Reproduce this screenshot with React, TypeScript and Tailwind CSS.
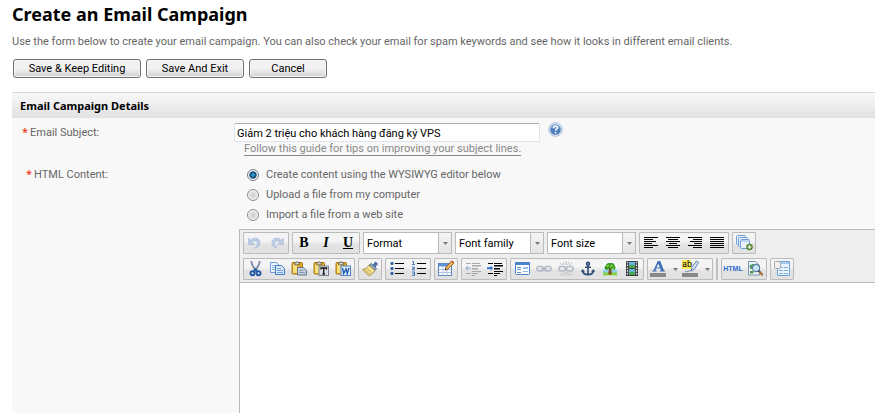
import type { ReactNode } from "react";

const blue = "#3f6fb5";

function Icon({ children }: { children: ReactNode }) {
  return (
    <svg viewBox="0 0 16 16" className="block size-4 overflow-visible" aria-hidden="true">
      {children}
    </svg>
  );
}

function Group({ children }: { children: ReactNode }) {
  return (
    <div className="flex h-[22px] shrink-0 rounded-[1px] border border-[#bbbbbb] bg-linear-to-b from-[#f4f4f4] from-40% to-[#e2e2e2] to-60%">
      {children}
    </div>
  );
}

function Tool({ label, children }: { label: string; children: ReactNode }) {
  return (
    <button type="button" aria-label={label} title={label} className="flex h-5 w-[22px] items-center justify-center">
      {children}
    </button>
  );
}

function Glyph({ label, className, children }: { label: string; className: string; children: ReactNode }) {
  return (
    <Tool label={label}>
      <span className={`font-['Liberation_Serif',serif] text-[14px] leading-4 font-bold text-black ${className}`}>
        {children}
      </span>
    </Tool>
  );
}

function Picker({ label }: { label: string }) {
  return (
    <div className="relative h-[22px] w-[89px] shrink-0">
      <select
        aria-label={label}
        className="block h-full w-full appearance-none border border-[#bbbbbb] bg-white pt-px pr-4 pl-[3px] text-[11px] text-black"
      >
        <option>{label}</option>
      </select>
      <span className="pointer-events-none absolute inset-y-px right-px flex w-[13px] items-center justify-center border-l border-[#bbbbbb] bg-linear-to-b from-[#f4f4f4] to-[#e4e4e4]">
        <Caret />
      </span>
    </div>
  );
}

function Caret() {
  return (
    <svg viewBox="0 0 5 3" className="block h-[3px] w-[5px]" aria-hidden="true">
      <path d="M0 0h5L2.5 3z" fill="#777" />
    </svg>
  );
}

function Lines({ rows }: { rows: [number, number][] }) {
  return (
    <Icon>
      {rows.map(([x, w], i) => (
        <rect key={i} x={x} y={2 + i * 2} width={w} height="1" fill="#000" />
      ))}
    </Icon>
  );
}

function Clipboard({ children }: { children: ReactNode }) {
  return (
    <Icon>
      <rect x="1" y="1.500" width="10.500" height="11.500" rx="1" fill="#e6ad22" stroke="#9c6c12" strokeWidth=".9" />
      <path d="M2 3h4v9H2z" fill="#fadf7c" />
      <path d="M3.500 3.800V1.800H5C5 .3 7.200 .3 7.200 1.800h1.500v2z" fill="#d4d4d4" stroke="#66583a" strokeWidth=".8" />
      {children}
    </Icon>
  );
}

function Chain({ broken }: { broken?: boolean }) {
  return (
    <Icon>
      <g fill="none" stroke="#b4bac6" strokeWidth="1.600">
        <rect x="1" y="5.500" width="6.500" height="4.500" rx="2.200" />
        <rect x="8.500" y="5.500" width="6.500" height="4.500" rx="2.200" />
        {!broken && <path d="M5 7.750h6" />}
      </g>
      {broken && (
        <path
          d="M8 0v4M5 1l1.500 3M11 1L9.500 4M2 2l2.500 2.500M14 2l-2.500 2.500M8 15v-4M5 14.500L6.500 11.500M11 14.500L9.500 11.500M2 14l2.500-2.500M14 14l-2.500-2.500"
          stroke="#bcc0c8"
          strokeWidth="1"
        />
      )}
    </Icon>
  );
}

function Indent({ faded, flip }: { faded?: boolean; flip?: boolean }) {
  const ink = faded ? "#a9a9a9" : "#000";
  return (
    <Icon>
      <g fill={ink}>
        <rect x="1" y="2" width="5" height="1" />
        <rect x="7" y="2" width="8" height="1" />
        <rect x="7" y="4" width="9" height="1.500" />
        <rect x="7" y="7" width="6" height="1.500" />
        <rect x="7" y="10" width="9" height="1" />
        <rect x="1" y="12" width="5" height="1" />
        <rect x="7" y="12" width="6" height="1" />
        <rect x="7" y="14" width="3" height="1" />
      </g>
      <path
        d={flip ? "M0 7l3-2.500v2h3v1.500H3v2z" : "M6 7L3.500 4.500v1.800H0v1.700h3.500v1.800z"}
        fill={faded ? "#a5bbdc" : "#2f6fd0"}
      />
    </Icon>
  );
}

function Arrow({ flip }: { flip?: boolean }) {
  return (
    <Icon>
      <g transform={flip ? "translate(16 0) scale(-1 1)" : undefined}>
        <path
          d="M1.500 3v6.500h6L5.400 7.300C7.500 4.800 10.600 6 10.400 9c-.1 1.700-1.200 3-2.900 4.300 3.500-.6 5.600-2.700 5.600-5.600C13.100 3.200 7.300 1.300 3.700 5.300z"
          fill="#bccce4"
          stroke="#a5b9d8"
          strokeWidth=".6"
        />
      </g>
    </Icon>
  );
}

const contentSources = [
  "Create content using the WYSIWYG editor below",
  "Upload a file from my computer",
  "Import a file from a web site",
];

const actions = [
  { label: "Save & Keep Editing", width: "w-32" },
  { label: "Save And Exit", width: "w-[98px]" },
  { label: "Cancel", width: "w-[78px]" },
];

function FirstRow() {
  return (
    <div className="flex gap-[3px]">
      <Group>
        <Tool label="Undo"><Arrow /></Tool>
        <Tool label="Redo"><Arrow flip /></Tool>
      </Group>
      <Group>
        <Glyph label="Bold" className="">B</Glyph>
        <Glyph label="Italic" className="italic">I</Glyph>
        <Glyph label="Underline" className="underline">U</Glyph>
      </Group>
      <Picker label="Format" />
      <Picker label="Font family" />
      <Picker label="Font size" />
      <Group>
        <Tool label="Align left"><Lines rows={[[1, 14], [1, 9], [1, 12], [1, 8], [1, 14], [1, 9]]} /></Tool>
        <Tool label="Align center"><Lines rows={[[1, 14], [3, 10], [1, 14], [4, 8], [1, 14], [3, 10]]} /></Tool>
        <Tool label="Align right"><Lines rows={[[1, 14], [6, 9], [3, 12], [7, 8], [1, 14], [6, 9]]} /></Tool>
        <Tool label="Justify"><Lines rows={[[1, 14], [1, 14], [1, 14], [1, 14], [1, 14], [1, 14]]} /></Tool>
      </Group>
      <Group>
        <Tool label="Insert layer">
          <Icon>
            <g fill="#e8f1fb" stroke="#6f9fd6" strokeWidth="1">
              <rect x=".5" y=".5" width="9" height="9" rx="1" />
              <rect x="2.500" y="2.500" width="9" height="9" rx="1" />
              <rect x="4.500" y="4.500" width="9" height="9" rx="1" />
            </g>
            <path d="M5 6h8" stroke="#8fb6e4" strokeWidth="1" />
            <circle cx="13.500" cy="12" r="3" fill="#5c8f3b" stroke="#3e6e22" strokeWidth=".6" />
            <path d="M13.500 10.200v3.600M11.700 12h3.600" stroke="#fff" strokeWidth="1.200" />
          </Icon>
        </Tool>
      </Group>
    </div>
  );
}

function SecondRow() {
  return (
    <div className="flex gap-[3px]">
      <Group>
        <Tool label="Cut">
          <Icon>
            <path d="M4.500 0C4 3 6 6 9.500 11M12.500 0C13 3 11 6 7.500 11" fill="none" stroke="#7c8ca4" strokeWidth="1.800" />
            <circle cx="5.500" cy="12.300" r="2" fill="none" stroke="#2458a8" strokeWidth="1.900" />
            <circle cx="11.500" cy="12.300" r="2" fill="none" stroke="#2458a8" strokeWidth="1.900" />
            <path d="M6.800 10.500L8.500 8l1.800 2.500" fill="none" stroke="#2458a8" strokeWidth="1.700" />
          </Icon>
        </Tool>
        <Tool label="Copy">
          <Icon>
            <path d="M1.500 1.500h6l3 3v7h-9z" fill="#eef5fd" stroke="#6d9ad6" />
            <path d="M3 4.500h4M3 6.500h4M3 8.500h3" stroke="#8db2e2" />
            <path d="M6.500 4.500h6l3 3v6h-9z" fill="#dce9fa" stroke="#3f78c4" />
            <path d="M8 7.500h4M8 9.500h6M8 11.500h6" stroke="#76a2dc" />
          </Icon>
        </Tool>
        <Tool label="Paste">
          <Clipboard>
            <path d="M6.500 6.500h5.500l3.500 3v4.500h-9z" fill="#c6d0de" stroke="#66758b" />
            <path d="M8 9.500h4M8 11.500h6" stroke="#8796ab" />
          </Clipboard>
        </Tool>
        <Tool label="Paste as text">
          <Clipboard>
            <rect x="6" y="5" width="9.500" height="9.500" fill="#d9dde3" stroke="#77818f" />
            <path d="M8 8.500V7h5.500v1.500M10.750 7v6M9.500 13h2.500" fill="none" stroke="#111" strokeWidth="1.300" />
          </Clipboard>
        </Tool>
        <Tool label="Paste from Word">
          <Clipboard>
            <rect x="6" y="5" width="9.500" height="9.500" fill="#e4eefb" stroke="#4f82c6" />
            <path d="M7.500 7l1.200 5.500L11 8l1.200 4.500L14 7" fill="none" stroke="#225bb0" strokeWidth="1.400" />
          </Clipboard>
        </Tool>
      </Group>
      <Group>
        <Tool label="Clean up">
          <Icon>
            <path d="M11 4.500L13.500 1l2 1.800-2.500 3.200z" fill="#4d78b8" stroke="#31568c" strokeWidth=".8" />
            <path d="M9.500 2.500l5 5-1.500 2-6-5.500z" fill="#8ea3c0" stroke="#4d6486" strokeWidth=".8" />
            <path d="M7 4l6 5.500C11.500 12 9 14 6.500 14.500L.8 8.500C3.500 8 5.500 6.500 7 4z" fill="#f5e39a" stroke="#94782a" strokeWidth=".8" />
            <path d="M3 8.500l4.500 5M5 7.500l4.500 4.500" stroke="#c09a34" strokeWidth=".9" />
          </Icon>
        </Tool>
      </Group>
      <Group>
        <Tool label="Bulleted list">
          <Icon>
            {[2, 7, 12].map((y) => (
              <g key={y}>
                <rect x="1.500" y={y - 1} width="3" height="3" rx="1" fill="#2f5ea8" />
                <rect x="6" y={y} width="9" height="1" fill="#000" />
              </g>
            ))}
          </Icon>
        </Tool>
        <Tool label="Numbered list">
          <Icon>
            <path
              d="M1 .5h1.500v3M1 3.500h3M1 6h2.500v1.500H1.500V9H4M1 11h2.500v3.500H1M1.500 12.700h2"
              fill="none"
              stroke="#4b7cc4"
              strokeWidth="1"
            />
            {[2, 7, 12].map((y) => (
              <rect key={y} x="6" y={y} width="9" height="1" fill="#000" />
            ))}
          </Icon>
        </Tool>
      </Group>
      <Group>
        <Tool label="Insert table">
          <Icon>
            <rect x=".5" y="2.500" width="13" height="12" fill="#fff" stroke="#5c86c0" />
            <rect x="1" y="3" width="12" height="2.500" fill="#5f92d8" />
            <path d="M1 8.500h12M1 11.500h12M5 5.500v9M9 5.500v9" stroke="#adc6e8" />
            <path d="M7 9l1-3 5.500-6L16 2.200 10 8z" fill="#f0b556" stroke="#6b4a23" strokeWidth=".8" />
            <path d="M13 .5L14 -.5 16.500 1.500l-1 1z" fill="#c8543c" />
            <path d="M7 9l.5-1.500 1 1z" fill="#222" />
          </Icon>
        </Tool>
      </Group>
      <Group>
        <Tool label="Outdent"><Indent faded flip /></Tool>
        <Tool label="Indent"><Indent /></Tool>
      </Group>
      <Group>
        <Tool label="Edit style">
          <Icon>
            <rect x="1.500" y="1.500" width="14" height="12" rx="1" fill="#fff" stroke="#4c82ca" />
            <rect x="1" y="1" width="15" height="3" rx="1" fill="#4c82ca" />
            <path d="M3 6.500h4M3 8.500h4M3 11.500h4" stroke="#5f90d2" />
            <rect x="9" y="6" width="5" height="2" fill="#9dbde6" />
            <path d="M9 10.500h5" stroke="#8db2e2" />
          </Icon>
        </Tool>
        <Tool label="Insert link"><Chain /></Tool>
        <Tool label="Remove link"><Chain broken /></Tool>
        <Tool label="Insert anchor">
          <Icon>
            <g fill="none" stroke="#2c4a75" strokeWidth="1.600">
              <circle cx="8" cy="2.800" r="1.400" />
              <path d="M8 4.500v9M5 6.300h6M2.500 9.500c.5 3 2.500 4.200 5.500 4.200s5-1.200 5.500-4.200" />
            </g>
            <path d="M1 11l1.500-3L5 10.500zM15 11l-1.500-3L11 10.500z" fill="#2c4a75" />
          </Icon>
        </Tool>
        <Tool label="Insert image">
          <Icon>
            <rect x="1" y="1" width="14" height="13.500" fill="#f4fbff" />
            <rect x="1" y="8.500" width="14" height="3.500" fill="#8fd0f0" />
            <rect x="1" y="11.500" width="14" height="3" fill="#86cf3f" />
            <path d="M7 7h2.200l.6 6.500H6.300z" fill="#7c4d1e" />
            <path d="M4 8.500C1.800 8 2.300 5 4 4.800 4 2.300 6.500 1.300 8.500 2.300 11 1.300 13 3 12.500 5c1.800 1 1.300 3.600-.8 3.800-1.500 0-2-1-3.500-1S5.500 9.200 4 8.500z" fill="#379420" />
            <path d="M4.500 6l2.500-2M8 6l2.500-2.300M10 7.800l2-1.300" stroke="#8edb45" strokeWidth="1.300" />
          </Icon>
        </Tool>
        <Tool label="Insert media">
          <Icon>
            <rect x="2" y="0" width="12" height="15" fill="#3c3f42" />
            <rect x="5" y="1" width="6" height="6" fill="#68b7d9" />
            <rect x="5" y="8" width="6" height="6" fill="#68b7d9" />
            <path d="M5 7V5l3-1.500L11 5v2zM5 14v-2l3-1.500 3 1.500v2z" fill="#49a34d" />
            <path d="M3.500.8v14M12.500.8v14" stroke="#e6e6e6" strokeWidth="1.300" strokeDasharray="1.500 1.300" />
          </Icon>
        </Tool>
      </Group>
      <Group>
        <Tool label="Text color">
          <Icon>
            <path
              d="M6.800 0h2.400l3.800 9.500h1v1H8.800v-1h1.300l-.7-2H5l-.7 2h1.400v1H1.300v-1h1.100zM7.200 2.800L5.500 6.500h3.400z"
              fill={blue}
              fillRule="evenodd"
            />
            <rect x="-1" y="12" width="16" height="4" fill="#888" />
          </Icon>
        </Tool>
        <button type="button" aria-label="Choose text color" className="flex h-5 w-2.5 items-center justify-center"><Caret /></button>
        <Tool label="Highlight color">
          <span className="relative block size-4">
            <Icon>
              <rect x="-1" y="-1" width="9" height="9" fill="#f8ec4f" />
              <path d="M9 6l4.500-6 2 1.500L11.500 8 8 10z" fill="#dfe7f2" stroke="#4a6fa8" strokeWidth=".9" />
              <path d="M2 10.500c2 1 4-1.500 6-.5" fill="none" stroke="#6d7f9b" strokeWidth=".9" />
              <rect x="-1" y="12" width="16" height="4" fill="#888" />
            </Icon>
            <span className="absolute -top-px -left-px text-[9px] leading-[9px] text-black">ab</span>
          </span>
        </Tool>
        <button type="button" aria-label="Choose highlight color" className="flex h-5 w-2.5 items-center justify-center"><Caret /></button>
      </Group>
      <div className="h-[22px] w-0.5 shrink-0 bg-[#c0c0c0]" />
      <Group>
        <Tool label="Edit HTML source">
          <span className="font-['Liberation_Sans',sans-serif] text-[7px] leading-4 font-bold text-[#2f6bd0]">HTML</span>
        </Tool>
        <Tool label="Preview">
          <Icon>
            <path d="M1.500.500h7l4 4v9.500h-11z" fill="#eef5fb" stroke="#7c92a8" />
            <path d="M2.500 4.500l4-2 1 3-2 3-2.500-1zM3 10h3.500v2.500H3z" fill="#4f9a57" />
            <circle cx="9" cy="7" r="3.600" fill="#c9e4f5" stroke="#5b7fa5" strokeWidth="1.200" />
            <path d="M11.500 9.700l1.500 1.600" stroke="#34495f" strokeWidth="2.200" />
            <path d="M13 11.300l2 2.200" stroke="#a8733a" strokeWidth="2.400" strokeLinecap="round" />
          </Icon>
        </Tool>
      </Group>
      <Group>
        <Tool label="Insert content">
          <Icon>
            <path d="M3.500.500h12v14h-12z" fill="#e9f3fd" stroke="#6fa1dc" />
            <path d="M4 2h11" stroke="#a9caef" strokeWidth="2" />
            <path d="M5 6.500h9M5 9.500h9M5 12.500h9" stroke="#7faed0" />
            <path d="M9.500 5v9" stroke="#e9f3fd" />
            <rect x=".5" y=".5" width="6" height="7" rx="1" fill="#efefef" stroke="#a8a8a8" />
          </Icon>
        </Tool>
      </Group>
    </div>
  );
}

export default function App() {
  return (
    <main className="w-full overflow-hidden bg-white pl-3 font-[Roboto,'Noto_Sans',sans-serif] text-[11px] leading-4 text-[#666666]">
      <h1 className="pt-0.5 font-['Noto_Sans',sans-serif] text-[18px] leading-6 font-bold text-black">
        Create an Email Campaign
      </h1>
      <p className="mt-2 whitespace-nowrap">
        Use the form below to create your email campaign. You can also check your email for spam keywords and see how it
        looks in different email clients.
      </p>
      <div className="mt-[9px] ml-px flex gap-[5px]">
        {actions.map((a) => (
          <button
            key={a.label}
            type="button"
            className={`h-[19px] rounded-[3px] border border-[#707070] bg-linear-to-b from-[#f2f2f2] from-50% to-[#d0d0d0] to-100% pt-px leading-4 whitespace-nowrap text-black shadow-[inset_0_0_0_1px_#f6f6f6] ${a.width}`}
          >
            {a.label}
          </button>
        ))}
      </div>

      <form className="mt-3.5 bg-[#f8f8f8]" onSubmit={(e) => e.preventDefault()}>
        <h2 className="h-[26px] border-t border-[#d8d8d8] bg-linear-to-b from-[#f8f8f8] to-[#e2e2e2] pl-2 font-['Noto_Sans',sans-serif] leading-[26px] font-bold text-black">
          Email Campaign Details
        </h2>

        <div className="flex pt-1">
          <label htmlFor="subject" className="w-[222px] shrink-0 pt-0.5 pl-2.5">
            <span className="mr-0.5 font-['Noto_Sans',sans-serif] text-[#ee2200]">*</span>Email Subject:
          </label>
          <div>
            <div className="flex items-start gap-2">
              <input
                id="subject"
                type="text"
                defaultValue="Giảm 2 triệu cho khách hàng đăng ký VPS"
                className="mt-px h-[19px] w-[306px] rounded-[2px] border border-[#dfe3ea] border-t-[#abadb3] bg-white px-0.5 pt-px text-black"
              />
              <button type="button" aria-label="Help" className="size-[15px]">
                <svg viewBox="0 0 15 15" className="block size-[15px]" aria-hidden="true">
                  <circle cx="7.500" cy="7.500" r="6.800" fill="#dfe8f3" stroke="#a9bdd8" />
                  <circle cx="7.500" cy="7.500" r="5.300" fill="#4f80bd" />
                  <path d="M3 6a4.700 4.200 0 0 1 9 0c-2 1.200-6 1.500-9 0z" fill="#7ba3d3" />
                  <path d="M5.600 5.900c0-2.500 3.900-2.500 3.900-.2 0 1.500-1.900 1.400-1.900 3" fill="none" stroke="#fff" strokeWidth="1.400" />
                  <circle cx="7.600" cy="10.600" r=".9" fill="#fff" />
                </svg>
              </button>
            </div>
            <a href="#guide" className="ml-2.5 block w-fit border-b border-[#888888] leading-[13px] text-[#888888]">
              Follow this guide for tips on improving your subject lines.
            </a>
          </div>
        </div>

        <div className="mt-2.5 flex">
          <div className="w-[227px] shrink-0 pl-3.5">
            <span className="mr-0.5 font-['Noto_Sans',sans-serif] text-[#ee2200]">*</span>HTML Content:
          </div>
          <div className="min-w-0 flex-1">
            <fieldset aria-label="HTML Content" className="pl-2">
              {contentSources.map((source, i) => (
                <label key={source} className="flex h-5 w-fit items-start gap-[7px] leading-[18px]">
                  <input
                    type="radio"
                    name="source"
                    defaultChecked={i === 0}
                    className="mt-[3px] size-3 appearance-none rounded-full border border-[#8e8f8f] bg-radial from-[#cfcfcf] to-[#f4f4f4] shadow-[inset_0_0_0_1px_#f4f4f4] checked:border-[#6f7f8d] checked:from-[#2ea0d8] checked:from-10% checked:via-[#123f63] checked:via-45% checked:to-[#f4f4f4] checked:to-60%"
                  />
                  {source}
                </label>
              ))}
            </fieldset>
            <div className="mt-[3px] border-t border-l border-[#bbbbbb] bg-white">
              <div role="toolbar" aria-label="Editor" className="flex flex-col gap-1 border-b border-[#bbbbbb] bg-[#eeeeee] pt-0.5 pb-0.5 pl-[3px]">
                <FirstRow />
                <SecondRow />
              </div>
              <textarea aria-label="HTML Content" className="block h-[130px] w-full resize-none bg-white p-2 outline-none" />
            </div>
          </div>
        </div>
      </form>
    </main>
  );
}
